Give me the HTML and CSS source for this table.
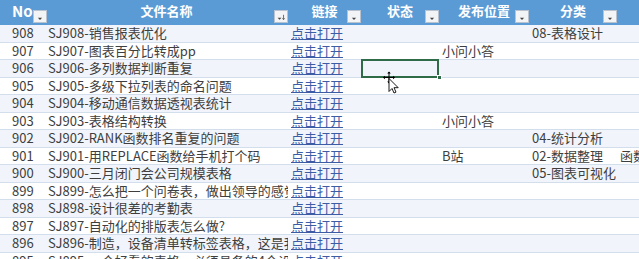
FILE: index.html
```html
<!DOCTYPE html>
<html lang="zh">
<head>
<meta charset="utf-8">
<title>文件列表</title>
<link rel="stylesheet" href="styles.css">
</head>
<body>
<div class="sheet">
  <div class="row head">
    <div class="hc no"><span class="ht">No</span><span class="flt"><svg viewBox="0 0 14 13"><path d="M4.5 8h5l-2.5 2.5z" fill="#444"/></svg></span></div>
    <div class="hc ctr"><span></span><span class="ht">文件名称</span><span class="flt"><svg viewBox="0 0 14 13"><path d="M3 8h4.5l-2.25 2.25z" fill="#444"/><path d="M10 4.5v5.5M8.6 8.6l1.4 1.6 1.4-1.6" stroke="#444" stroke-width="0.9" fill="none"/></svg></span></div>
    <div class="hc ctr"><span></span><span class="ht">链接</span><span class="flt"><svg viewBox="0 0 14 13"><path d="M4.5 8h5l-2.5 2.5z" fill="#444"/></svg></span></div>
    <div class="hc ctr"><span></span><span class="ht">状态</span><span class="flt"><svg viewBox="0 0 14 13"><path d="M4.5 8h5l-2.5 2.5z" fill="#444"/></svg></span></div>
    <div class="hc ctr"><span></span><span class="ht">发布位置</span><span class="flt"><svg viewBox="0 0 14 13"><path d="M4.5 8h5l-2.5 2.5z" fill="#444"/></svg></span></div>
    <div class="hc ctr"><span></span><span class="ht">分类</span><span class="flt"><svg viewBox="0 0 14 13"><path d="M4.5 8h5l-2.5 2.5z" fill="#444"/></svg></span></div>
    <div class="hc"></div>
  </div>

  <div class="row band"><div class="c no">908</div><div class="c nm">SJ908-销售报表优化</div><div class="c"><a class="lnk">点击打开</a></div><div class="c"></div><div class="c"></div><div class="c">08-表格设计</div><div class="c"></div></div>
  <div class="row"><div class="c no">907</div><div class="c nm">SJ907-图表百分比转成pp</div><div class="c"><a class="lnk">点击打开</a></div><div class="c"></div><div class="c">小问小答</div><div class="c"></div><div class="c"></div></div>
  <div class="row band"><div class="c no">906</div><div class="c nm">SJ906-多列数据判断重复</div><div class="c"><a class="lnk">点击打开</a></div><div class="c sel"></div><div class="c"></div><div class="c"></div><div class="c"></div></div>
  <div class="row"><div class="c no">905</div><div class="c nm">SJ905-多级下拉列表的命名问题</div><div class="c"><a class="lnk">点击打开</a></div><div class="c"></div><div class="c"></div><div class="c"></div><div class="c"></div></div>
  <div class="row band"><div class="c no">904</div><div class="c nm">SJ904-移动通信数据透视表统计</div><div class="c"><a class="lnk">点击打开</a></div><div class="c"></div><div class="c"></div><div class="c"></div><div class="c"></div></div>
  <div class="row"><div class="c no">903</div><div class="c nm">SJ903-表格结构转换</div><div class="c"><a class="lnk">点击打开</a></div><div class="c"></div><div class="c">小问小答</div><div class="c"></div><div class="c"></div></div>
  <div class="row band"><div class="c no">902</div><div class="c nm">SJ902-RANK函数排名重复的问题</div><div class="c"><a class="lnk">点击打开</a></div><div class="c"></div><div class="c"></div><div class="c">04-统计分析</div><div class="c"></div></div>
  <div class="row"><div class="c no">901</div><div class="c nm">SJ901-用REPLACE函数给手机打个码</div><div class="c"><a class="lnk">点击打开</a></div><div class="c"></div><div class="c">B站</div><div class="c">02-数据整理</div><div class="c">函数</div></div>
  <div class="row band"><div class="c no">900</div><div class="c nm">SJ900-三月闭门会公司规模表格</div><div class="c"><a class="lnk">点击打开</a></div><div class="c"></div><div class="c"></div><div class="c">05-图表可视化</div><div class="c"></div></div>
  <div class="row"><div class="c no">899</div><div class="c nm">SJ899-怎么把一个问卷表，做出领导的感觉</div><div class="c"><a class="lnk">点击打开</a></div><div class="c"></div><div class="c"></div><div class="c"></div><div class="c"></div></div>
  <div class="row band"><div class="c no">898</div><div class="c nm">SJ898-设计很差的考勤表</div><div class="c"><a class="lnk">点击打开</a></div><div class="c"></div><div class="c"></div><div class="c"></div><div class="c"></div></div>
  <div class="row"><div class="c no">897</div><div class="c nm">SJ897-自动化的排版表怎么做?</div><div class="c"><a class="lnk">点击打开</a></div><div class="c"></div><div class="c"></div><div class="c"></div><div class="c"></div></div>
  <div class="row band"><div class="c no">896</div><div class="c nm">SJ896-制造，设备清单转标签表格，这是我的</div><div class="c"><a class="lnk">点击打开</a></div><div class="c"></div><div class="c"></div><div class="c"></div><div class="c"></div></div>
  <div class="row"><div class="c no">895</div><div class="c nm">SJ895-一个好看的表格，必须具备的4个设计</div><div class="c"><a class="lnk">点击打开</a></div><div class="c"></div><div class="c"></div><div class="c"></div><div class="c"></div></div>

  <svg class="cursor" viewBox="0 0 18 24" width="18" height="24">
    <g stroke="#000" stroke-width="1" fill="#000">
      <path d="M7 1v11M1.5 6.5h11" fill="none"/>
      <path d="M7 0.5l-1.8 2h3.6z M7 12.5l-1.8-2h3.6z M1 6.5l2-1.8v3.6z M13 6.5l-2-1.8v3.6z" stroke="none"/>
    </g>
    <path d="M7 7.5v13l3-3 2 4.5 2-0.9-2-4.4h4.2z" fill="#fff" stroke="#000" stroke-width="0.9" stroke-linejoin="round"/>
  </svg>
</div>
</body>
</html>
```
FILE: styles.css
```css
html, body {
  margin: 0;
  padding: 0;
  background: #ffffff;
  overflow: hidden;
}

.sheet {
  position: relative;
  width: 639px;
  height: 259px;
  overflow: hidden;
  font-family: "Noto Sans CJK SC", "Noto Sans", sans-serif;
  font-size: 13px;
  color: #3e3e3e;
}

.row {
  display: grid;
  grid-template-columns: 45px 243px 73px 78px 90px 88px 1fr;
  height: 17.5px;
  box-sizing: border-box;
  border-bottom: 1px solid #d3deec;
  background: #ffffff;
}

.row.band {
  background: #f1f5fb;
}

.row.head {
  height: 25px;
  background: #5b9bd5;
  border-bottom: none;
}

.hc {
  display: grid;
  grid-template-columns: 14px 1fr 14px;
  align-items: start;
  color: #ffffff;
  font-weight: bold;
  font-size: 13px;
  line-height: 21px;
  min-width: 0;
}

.hc.no {
  grid-template-columns: 1fr 14px;
  padding-left: 12px;
  font-size: 15px;
}

.hc.ctr .ht {
  text-align: center;
  white-space: nowrap;
}

.flt {
  display: block;
  width: 14px;
  height: 13px;
  margin-top: 10px;
  box-sizing: border-box;
  background: #f3f4f6;
  border: 1px solid #b9c3cf;
}

.flt svg {
  display: block;
  width: 12px;
  height: 11px;
}

.c {
  padding-left: 3px;
  line-height: 16.5px;
  white-space: nowrap;
  min-width: 0;
}

.c.nm {
  overflow: hidden;
}

.c.no {
  padding-left: 12px;
}

.lnk {
  color: #3d5ca6;
  text-decoration: underline;
  text-underline-offset: 1px;
}

.sel {
  position: relative;
  box-shadow: inset 0 0 0 2px #2f6b47;
  margin-top: -1px;
  margin-bottom: -1px;
}

.sel::after {
  content: "";
  position: absolute;
  right: -3px;
  bottom: -2px;
  width: 5px;
  height: 5px;
  background: #2f6b47;
  border: 1px solid #ffffff;
  box-sizing: border-box;
}

.cursor {
  position: absolute;
  left: 382px;
  top: 71px;
}
```
